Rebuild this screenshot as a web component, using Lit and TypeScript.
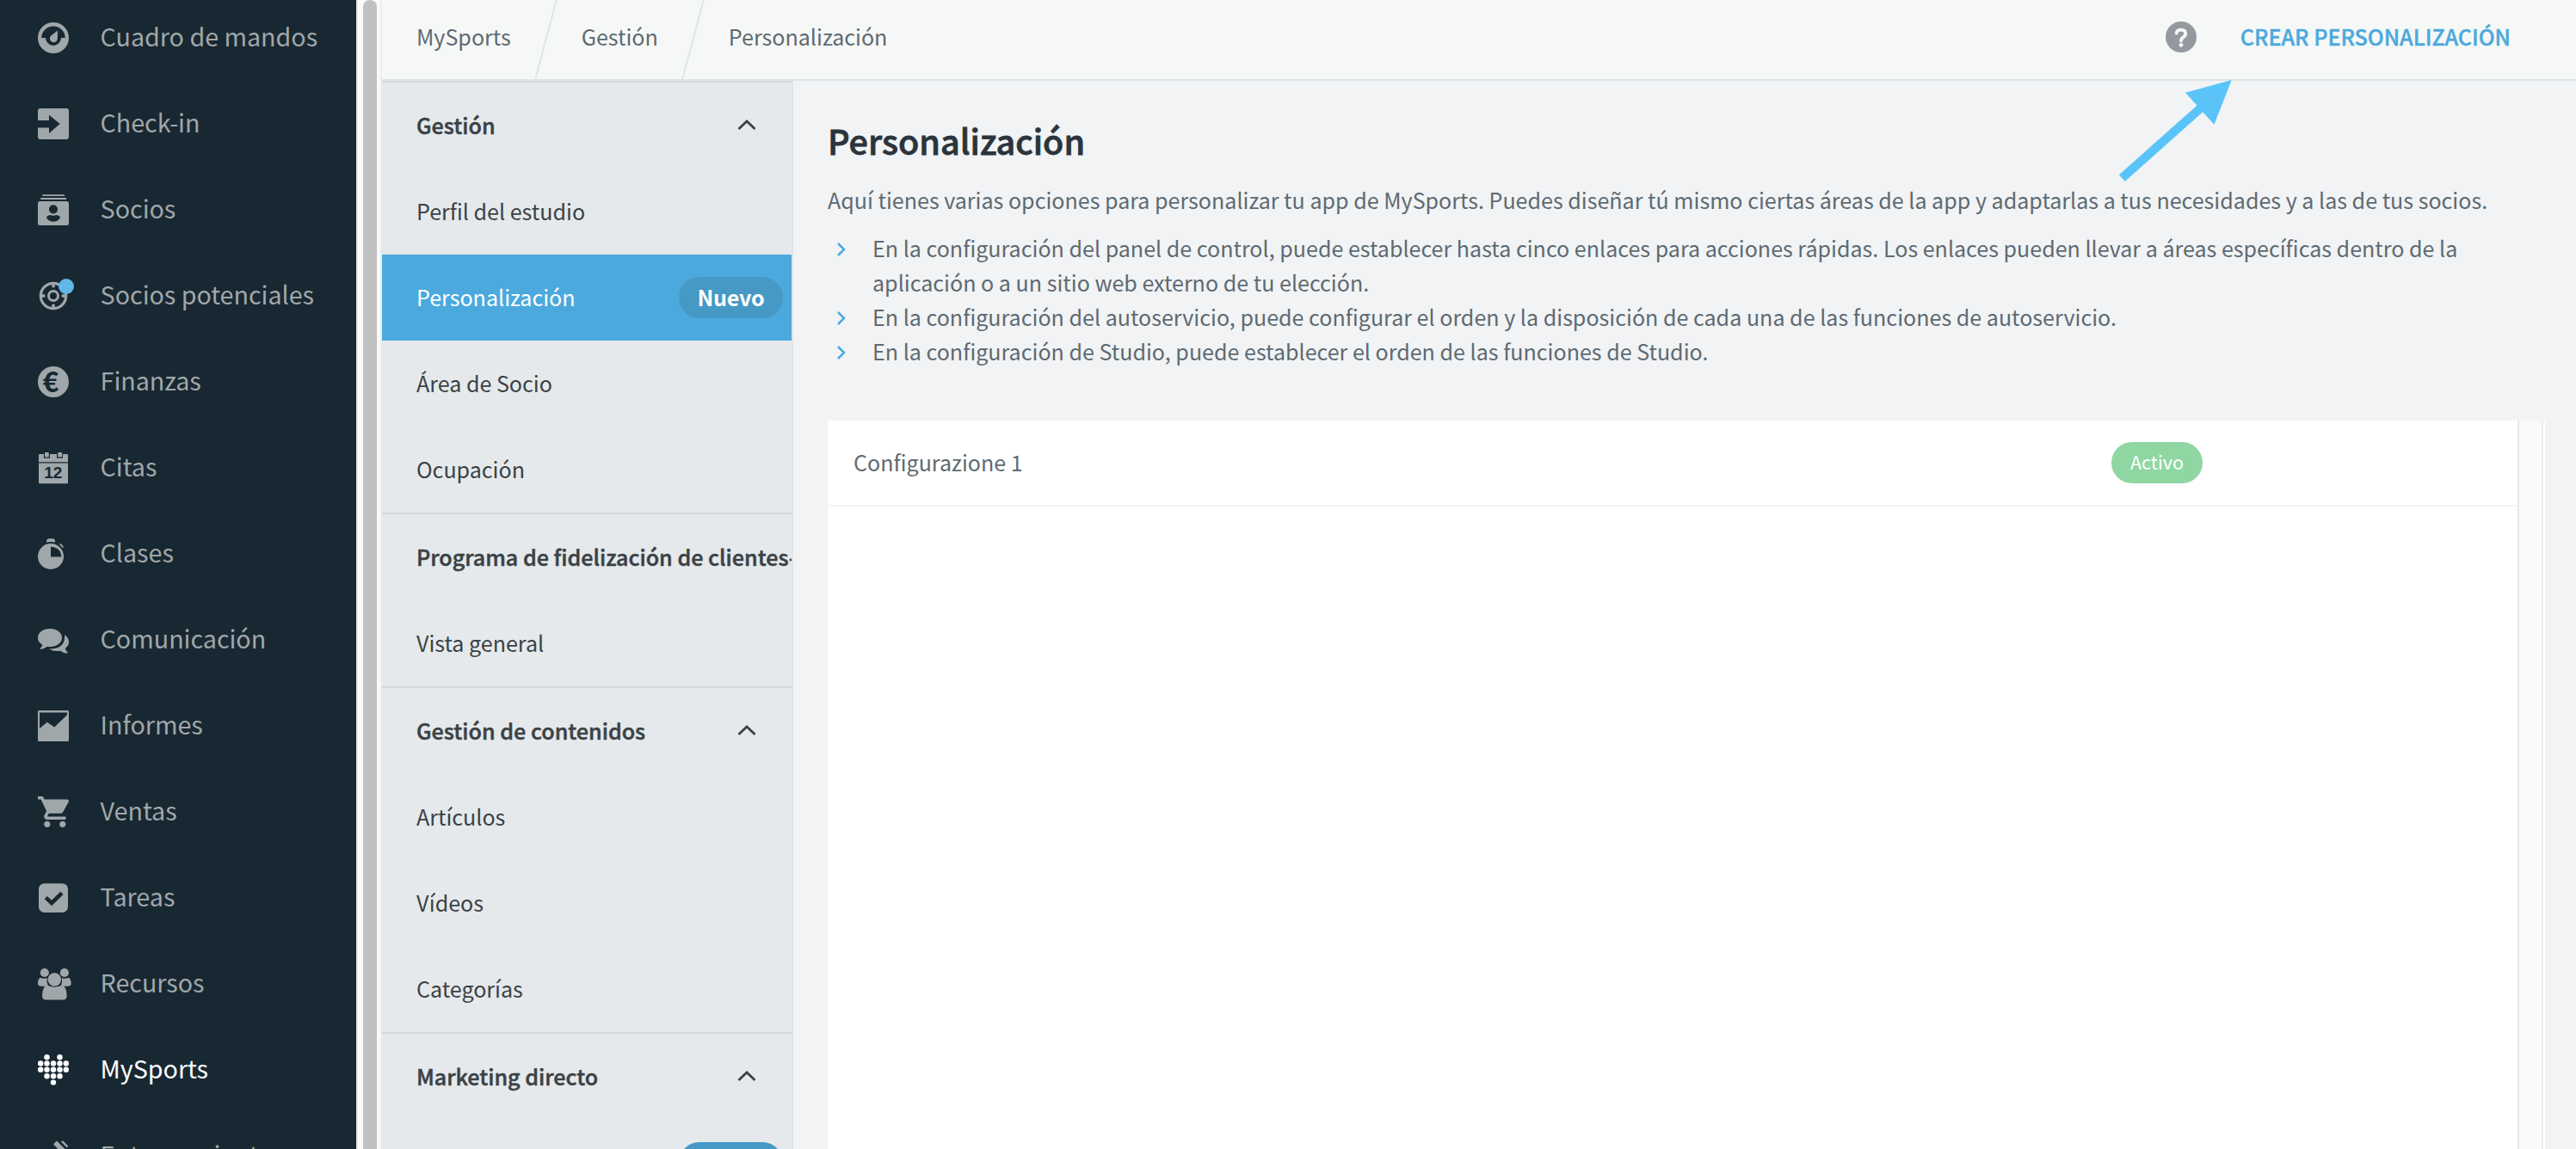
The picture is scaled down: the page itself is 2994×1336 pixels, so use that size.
import { LitElement, html, css, svg, nothing, type TemplateResult } from 'lit';
import { classMap } from 'lit/directives/class-map.js';

type Shape = TemplateResult<2>;

const heartDots: [number, number][] = [
  [10.5, 3.2], [25.5, 3.2],
  [3.2, 10.5], [10.5, 10.5], [18, 10.5], [25.5, 10.5], [32.8, 10.5],
  [3.2, 17.8], [10.5, 17.8], [18, 17.8], [25.5, 17.8], [32.8, 17.8],
  [10.5, 25.2], [18, 25.2], [25.5, 25.2],
  [18, 32.6],
];

const icons: Record<string, Shape> = {
  gauge: svg`<path fill-rule="evenodd" d="M18 0a18 18 0 1 1 0 36a18 18 0 1 1 0-36zM4.2 18h4.8a9 9 0 0 0 18 0h4.8a13.8 13.6 0 0 0-27.6 0z"/>
    <path d="M22.9 9.4V18.6a4.5 4.5 0 1 1-8.2-2.5z"/>`,
  checkin: svg`<path d="M3 0h30a3 3 0 0 1 3 3v30a3 3 0 0 1-3 3H3a3 3 0 0 1-3-3V22.4h13V29L25.7 18L13 7.8V14H0V3a3 3 0 0 1 3-3z"/>`,
  members: svg`<path d="M5.3.2h25.6v1.9H5.3zM3.2 4.1h29.8v1.9H3.2z"/>
    <path fill-rule="evenodd" d="M2.5 8h31a2.5 2.5 0 0 1 2.5 2.5v23a2.5 2.5 0 0 1-2.5 2.5h-31a2.5 2.5 0 0 1-2.5-2.5v-23a2.5 2.5 0 0 1 2.5-2.5zM18 12.2a5.1 5.1 0 1 0 0 10.2a5.1 5.1 0 1 0 0-10.2zM14.4 24q3.6 1.6 7.2 0q4.400 .8 4.400 3q-2.600 4.800-8 4.800t-8-4.800q0-2.200 4.400-3z"/>`,
  target: svg`<g fill="none" stroke="currentColor"><circle cx="18" cy="18" r="14.7" stroke-width="3.200"/><circle cx="18" cy="18" r="5.500" stroke-width="3"/>
    <path stroke-width="3.400" d="M18 3v5.300M18 33v-5.300M3 18h5.300M33 18h-5.300"/></g><circle cx="33" cy="7" r="9" fill="#5fb8e6"/>`,
  euro: svg`<circle cx="18" cy="18" r="18"/><text class="cut" x="15" y="29.600" font-size="32" text-anchor="middle">€</text>`,
  calendar: svg`<path d="M2 2h5v4.800h7V2h8v4.800h7V2h5a1 1 0 0 1 1 1v8.300H1V3a1 1 0 0 1 1-1zM1 12.600h34v22.700a1 1 0 0 1-1 1H2a1 1 0 0 1-1-1z"/>
    <rect x="8" y="0" width="4.800" height="5.500" rx="1"/><rect x="23.300" y="0" width="4.800" height="5.500" rx="1"/>
    <text class="cut digits" x="17.800" y="30.200" font-size="19" text-anchor="middle">12</text>`,
  stopwatch: svg`<path d="M10 4.500V3.600Q10 .2 13.500.2h3Q20 .2 20 3.600v.9q-5-1-10 0zM26.300 6.100q2.600 1.200 3.700 4.200l-1.500.6q-1.300-2.300-3.500-3.800z"/>
    <path fill-rule="evenodd" d="M15 6a15 15 0 1 1 0 30a15 15 0 1 1 0-30zM15 9.800v11.600h12.300q-.6-11-12.300-11.600z"/>`,
  comments: svg`<path d="M14 5c7.800 0 14 4.600 14 10.500S21.800 26 14 26q-1.600 0-3-.2Q7.200 28.800 2.800 28.900q-.8-.6 0-1.200Q5 26.300 5.300 23.700Q0 20.600 0 15.500C0 9.600 6.200 5 14 5z"/>
    <path d="M31 12.300Q36 15.500 36 20.600q0 4.300-4.300 7.400q.3 2.600 2.600 4.100q.6 1.100-.6 1.600q-4.200-.3-7.700-2.900q-7.600 1.200-12.800-2.200q9.300.2 14.300-4.300Q32 19.700 31 12.300z"/>`,
  report: svg`<path fill-rule="evenodd" d="M1.500 0h33A1.500 1.500 0 0 1 36 1.500v33a1.500 1.500 0 0 1-1.500 1.500h-33A1.500 1.500 0 0 1 0 34.500v-33A1.500 1.500 0 0 1 1.500 0zM2 2.600v18.300l8.800-7.200l8.500 5.700L34 5.300V2.600z"/>`,
  cart: svg`<path transform="translate(-1.800 -3.600) scale(1.800)" d="M7 18c-1.100 0-1.990.9-1.990 2S5.900 22 7 22s2-.9 2-2-.9-2-2-2zM1 2v2h2l3.600 7.590-1.350 2.450c-.16.28-.25.61-.25.96 0 1.100.9 2 2 2h12v-2H7.420c-.14 0-.25-.11-.25-.25l.03-.12.9-1.630h7.450c.75 0 1.410-.41 1.750-1.030l3.580-6.490c.08-.14.12-.31.12-.48 0-.55-.45-1-1-1H5.210l-.94-2H1zm16 16c-1.100 0-1.990.9-1.990 2s.89 2 1.990 2 2-.9 2-2-.9-2-2-2z"/>`,
  task: svg`<rect x="1" y="1.200" width="34" height="33.800" rx="6.500"/><path class="line-cut" d="M9.300 17.600L16 24L28 12.300"/>`,
  people: svg`<circle cx="7.800" cy="5" r="5.100"/><circle cx="30.900" cy="5" r="5.100"/>
    <path d="M2.600 10.700q5 2.200 8.200.2q-.9 5.300 1 8.900q-2.400.9-4 .9H4.500Q0 20.700 0 17.700q0-4.800 2.600-7zM36.100 10.700q-5 2.200-8.200.2q.9 5.300-1 8.900q2.400.9 4 .9h3.300q4.500 0 4.500-3q0-4.800-2.600-7z"/>
    <circle cx="19.350" cy="13" r="7.700"/>
    <path d="M10.500 19.600q8.900 4.200 17.700 0q4.600 1 5.500 11.400q.4 5.600-4.700 5.600H9.700Q4.600 36.600 5 31q.9-10.400 5.500-11.400z"/>`,
  heart: svg`${heartDots.map(([x, y]) => svg`<circle cx=${x} cy=${y} r="3.200"/>`)}`,
  training: svg`<path d="M18 4.500L22 .5L36 14.500L32 19zM27 1.800L29 .3L35.200 6.500L33.800 8.500z"/>`,
};

interface NavItem { label: string; icon: string; active?: boolean }
const nav: NavItem[] = [
  { label: 'Cuadro de mandos', icon: 'gauge' },
  { label: 'Check-in', icon: 'checkin' },
  { label: 'Socios', icon: 'members' },
  { label: 'Socios potenciales', icon: 'target' },
  { label: 'Finanzas', icon: 'euro' },
  { label: 'Citas', icon: 'calendar' },
  { label: 'Clases', icon: 'stopwatch' },
  { label: 'Comunicación', icon: 'comments' },
  { label: 'Informes', icon: 'report' },
  { label: 'Ventas', icon: 'cart' },
  { label: 'Tareas', icon: 'task' },
  { label: 'Recursos', icon: 'people' },
  { label: 'MySports', icon: 'heart', active: true },
  { label: 'Entrenamiento', icon: 'training' },
];

interface SubItem { label: string; badge?: string; active?: boolean }
interface SubSection { title: string; collapsible: boolean; items: SubItem[] }
const sections: SubSection[] = [
  {
    title: 'Gestión', collapsible: true, items: [
      { label: 'Perfil del estudio' },
      { label: 'Personalización', badge: 'Nuevo', active: true },
      { label: 'Área de Socio' },
      { label: 'Ocupación' },
    ],
  },
  { title: 'Programa de fidelización de clientes-', collapsible: false, items: [{ label: 'Vista general' }] },
  {
    title: 'Gestión de contenidos', collapsible: true,
    items: [{ label: 'Artículos' }, { label: 'Vídeos' }, { label: 'Categorías' }],
  },
  { title: 'Marketing directo', collapsible: true, items: [{ label: '', badge: 'Nuevo' }] },
];

const crumbs = ['MySports', 'Gestión', 'Personalización'];
const bullets = [
  'En la configuración del panel de control, puede establecer hasta cinco enlaces para acciones rápidas. Los enlaces pueden llevar a áreas específicas dentro de la aplicación o a un sitio web externo de tu elección.',
  'En la configuración del autoservicio, puede configurar el orden y la disposición de cada una de las funciones de autoservicio.',
  'En la configuración de Studio, puede establecer el orden de las funciones de Studio.',
];

class MainNav extends LitElement {
  static styles = css`
    :host { display: block; width: 414px; flex: none; height: 100%; overflow: hidden; background: #182832; }
    .list { margin-top: -6px; }
    .item { display: flex; align-items: center; gap: 36.600px; height: 100px; padding-left: 44px; color: #a0a7aa; }
    .active { color: #fff; }
    .icon { width: 36px; height: 36px; flex: none; overflow: visible; fill: currentColor; }
    .cut { fill: #182832; font-weight: 700; }
    .digits { font-family: "Liberation Sans", sans-serif; }
    .line-cut { fill: none; stroke: #182832; stroke-width: 4.600; }
    .label { font-size: 28.650px; line-height: 40px; padding-bottom: 5px; white-space: nowrap; }
  `;
  render() {
    return html`<nav class="list">${nav.map((n) => html`
      <div class=${classMap({ item: true, active: !!n.active })}>
        <svg class="icon" viewBox="0 0 36 36">${icons[n.icon]}</svg>
        <span class="label">${n.label}</span>
      </div>`)}</nav>`;
  }
}
customElements.define('main-nav', MainNav);

class SubNav extends LitElement {
  static styles = css`
    :host { display: block; width: 476px; flex: none; overflow: hidden; background: #e5e9ec; border-right: 2px solid #dde5e6; color: #3a4245; }
    .section { border-top: 2px solid #d0d9dd; }
    .row { display: flex; align-items: center; justify-content: space-between; height: 100px; padding-left: 40px; box-sizing: border-box; white-space: nowrap; }
    .text { line-height: 36px; padding-bottom: 2px; }
    .title { font-weight: 500; letter-spacing: 0.020px; -webkit-text-stroke: 0.500px currentColor; }
    .active { background: #4ca9dd; color: #fff; }
    .chevron { width: 22px; height: 14px; margin-right: 41px; flex: none; fill: none; stroke: currentColor; stroke-width: 2.800; }
    .badge { display: flex; align-items: center; justify-content: center; box-sizing: border-box; width: 121px; height: 48px; padding-bottom: 2px; margin-right: 10px; border-radius: 24px; background: #4699c5; color: #fff; font-weight: 700; letter-spacing: -0.200px; }
  `;
  render() {
    return html`${sections.map((s) => html`
      <section class="section">
        <div class="row">
          <span class="text title">${s.title}</span>
          ${s.collapsible ? html`<svg class="chevron" viewBox="0 0 22 14"><path d="M1.500 11L11 2L20.500 11"/></svg>` : nothing}
        </div>
        ${s.items.map((i) => html`
          <div class=${classMap({ row: true, active: !!i.active })}>
            <span class="text">${i.label}</span>
            ${i.badge ? html`<span class="badge">${i.badge}</span>` : nothing}
          </div>`)}
      </section>`)}`;
  }
}
customElements.define('sub-nav', SubNav);

class AppRoot extends LitElement {
  static styles = css`
    :host { display: flex; position: relative; width: 2994px; height: 1336px; overflow: hidden; background: #f1f3f5; color: #5e6a71; font-family: "Noto Sans CJK SC", "Noto Sans", sans-serif; font-size: 25.070px; }
    .scroll { flex: none; box-sizing: border-box; width: 30px; height: 100%; padding: 0 4px 0 6px; background: #fafafa; border-left: 2px solid #e8e8e8; border-right: 2px solid #ededed; }
    .thumb { width: 16px; height: 1400px; border-radius: 8px; background: #c1c1c1; }
    .main { flex: 1; min-width: 0; display: flex; flex-direction: column; }
    .header { flex: none; display: flex; align-items: center; justify-content: space-between; box-sizing: border-box; height: 94px; padding: 0 76px 6px 40px; background: #f6f8f7; border-bottom: 2px solid #dde5e6; }
    .crumbs { display: flex; align-items: center; gap: 28px; height: 92px; margin-bottom: -6px; }
    .crumb { padding-bottom: 8px; }
    .slash { width: 25px; height: 92px; margin-right: 1px; fill: none; stroke: #dfe5e8; stroke-width: 2; overflow: visible; }
    .actions { display: flex; align-items: center; gap: 51px; }
    .help { width: 36px; height: 36px; fill: #95989e; }
    .mark { fill: none; stroke: #f6f8f7; stroke-width: 3.800; stroke-linecap: round; }
    .point { fill: #f6f8f7; }
    .create { color: #4ca9dd; font-weight: 500; -webkit-text-stroke: 0.400px currentColor; padding-bottom: 2px; white-space: nowrap; }
    .body { flex: 1; min-height: 0; display: flex; }
    .content { flex: 1; min-width: 0; display: flex; flex-direction: column; padding: 39px 36px 0 40px; }
    .heading { margin: 0; font-size: 39.600px; line-height: 60px; font-weight: 500; -webkit-text-stroke: 0.800px currentColor; color: #2b343c; }
    .intro { margin: 19px 0 0; line-height: 40px; white-space: nowrap; }
    .bullets { list-style: none; margin: 16px 0 61px; padding: 0; line-height: 40px; }
    .bullet { display: flex; gap: 31px; padding: 0 0 0 11px; }
    .arrow { flex: none; width: 10px; height: 16px; margin-top: 14px; fill: none; stroke: #4ca9dd; stroke-width: 2.500; }
    .panel { flex: 1; display: flex; background: #fff; }
    .table { flex: 1; }
    .line { display: flex; align-items: center; height: 98px; border-bottom: 2px solid #f3f4f5; }
    .name { flex: none; width: 1462px; padding: 0 0 2px 30px; }
    .status { flex: none; box-sizing: border-box; display: flex; align-items: center; justify-content: center; width: 106px; height: 48px; padding-bottom: 3px; border-radius: 24px; background: #8fd6a3; color: #fff; font-size: 21.500px; }
    .track { width: 26px; margin-right: 2px; background: #fafafa; border-left: 2px solid #e8e8e8; border-right: 2px solid #ededed; }
    .pointer { position: absolute; left: 2460px; top: 90px; width: 136px; height: 124px; fill: #5ac4f9; }
  `;
  render() {
    return html`
      <main-nav></main-nav>
      <div class="scroll"><div class="thumb"></div></div>
      <div class="main">
        <header class="header">
          <div class="crumbs">${crumbs.map((c, i) => html`
            ${i ? html`<svg class="slash" viewBox="0 0 25 92"><path d="M24.800 0L.2 92"/></svg>` : nothing}
            <span class="crumb">${c}</span>`)}</div>
          <div class="actions">
            <svg class="help" viewBox="0 0 36 36"><circle cx="18" cy="18" r="18"/><path class="mark" d="M12.600 13.600Q13.200 9.600 18 9.600Q23.200 9.800 23.200 14Q23.200 16.400 20.600 18.200Q18 20 18 22.400"/><circle class="point" cx="18" cy="27.300" r="2.400"/></svg>
            <span class="create">CREAR PERSONALIZACIÓN</span>
          </div>
        </header>
        <div class="body">
          <sub-nav></sub-nav>
          <div class="content">
            <h1 class="heading">Personalización</h1>
            <p class="intro">Aquí tienes varias opciones para personalizar tu app de MySports. Puedes diseñar tú mismo ciertas áreas de la app y adaptarlas a tus necesidades y a las de tus socios.</p>
            <ul class="bullets">${bullets.map((b) => html`
              <li class="bullet"><svg class="arrow" viewBox="0 0 10 16"><path d="M1 1L8 8L1 15"/></svg><span>${b}</span></li>`)}</ul>
            <div class="panel">
              <div class="table">
                <div class="line"><span class="name">Configurazione 1</span><span class="status">Activo</span></div>
              </div>
              <div class="track"></div>
            </div>
          </div>
        </div>
      </div>
      <svg class="pointer" viewBox="2460 90 136 124"><path d="M2593.700 93L2540.200 107.800L2553.400 122.700L2462.900 203.300L2469.700 211L2560.200 130.200L2573.500 144.700z"/></svg>`;
  }
}
customElements.define('app-root', AppRoot);
